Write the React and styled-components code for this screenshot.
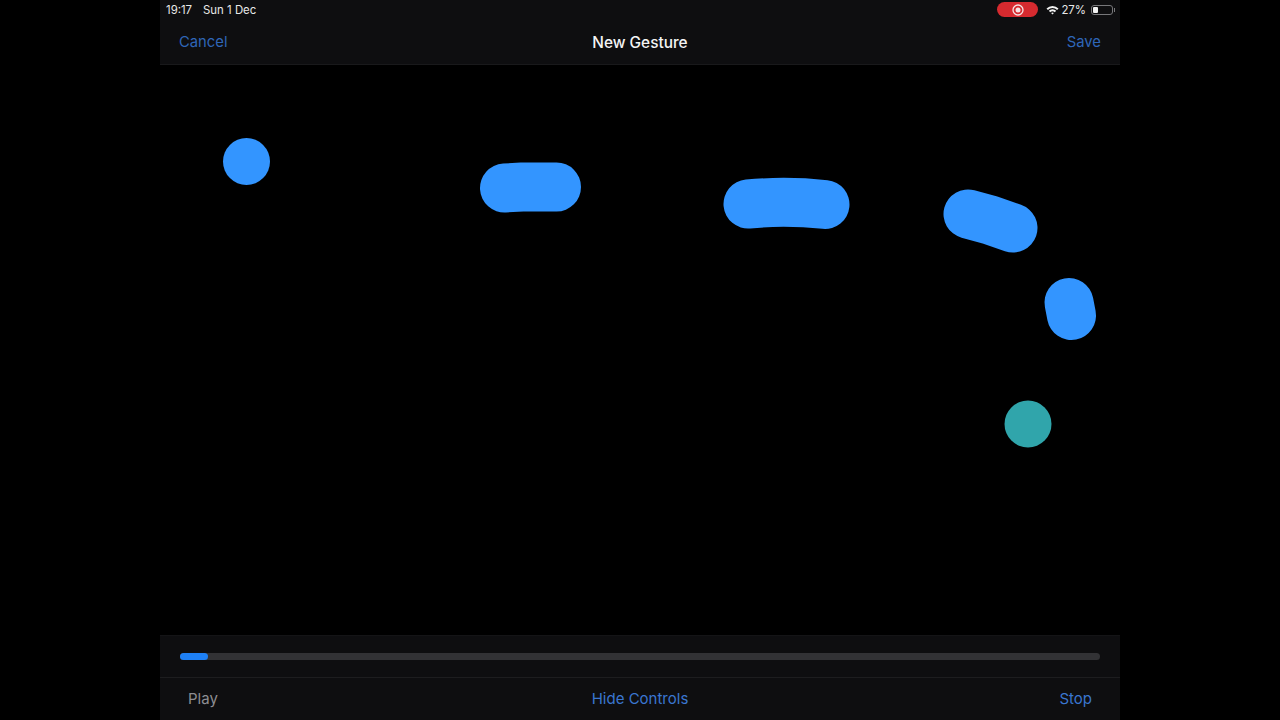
import styled, { createGlobalStyle } from "styled-components";

const GlobalStyle = createGlobalStyle`
  html, body {
    margin: 0;
    padding: 0;
    background: #000;
  }
  body {
    font-family: Inter, "Liberation Sans", sans-serif;
  }
`;

const Page = styled.div`
  width: 100%;
  height: 720px;
  display: flex;
  justify-content: center;
  overflow: hidden;
  background: #000;
`;

const Screen = styled.div`
  width: 960px;
  height: 720px;
  display: flex;
  flex-direction: column;
  background: #000;
`;

const Header = styled.header`
  height: 65px;
  flex: none;
  background: #0e0e10;
  border-bottom: 1px solid #19191b;
  box-sizing: border-box;
`;

const StatusBar = styled.div`
  height: 19px;
  padding: 0 5px 0 6px;
  display: flex;
  align-items: center;
  justify-content: space-between;
  font-size: 11.4px;
  color: #e8e8e8;
`;

const StatusGroup = styled.div`
  display: flex;
  align-items: center;
  gap: ${(p) => p.$gap || 0}px;
`;

const RecordPill = styled.div`
  width: 41px;
  height: 15px;
  margin-right: 8px;
  border-radius: 8px;
  background: #d62a2f;
  display: flex;
  align-items: center;
  justify-content: center;
`;

const WifiIcon = styled.svg`
  margin-right: 2px;
`;

const BatteryBody = styled.div`
  width: 22px;
  height: 10px;
  padding: 1px;
  margin-left: 5px;
  box-sizing: border-box;
  border: 1px solid #77777a;
  border-radius: 3px;
  display: flex;
`;

const BatteryLevel = styled.div`
  width: 27%;
  background: #f2f2f2;
  border-radius: 1px;
`;

const BatteryCap = styled.div`
  width: 1px;
  height: 4px;
  margin-left: 1px;
  background: #77777a;
`;

const NavRow = styled.div`
  height: 45px;
  box-sizing: border-box;
  padding: 1px 19px 0;
  display: grid;
  grid-template-columns: 1fr auto 1fr;
  align-items: center;
`;

const NavTitle = styled.div`
  font-size: 15.4px;
  font-weight: 500;
  color: #f4f4f4;
`;

const NavAction = styled.div`
  font-size: 14.8px;
  color: #2f66b8;
  text-align: ${(p) => p.$align || "left"};
`;

const Canvas = styled.main`
  flex: 1;
  min-height: 0;
`;

const GestureSvg = styled.svg`
  display: block;
  width: 100%;
  height: 100%;
`;

const Footer = styled.footer`
  height: 85px;
  flex: none;
  background: #0e0e10;
  display: flex;
  flex-direction: column;
`;

const SliderRow = styled.div`
  height: 43px;
  padding: 0 20px;
  flex: none;
  box-sizing: border-box;
  display: flex;
  align-items: center;
  border-top: 1px solid #141416;
  border-bottom: 1px solid #1d1d1f;
`;

const Track = styled.div`
  width: 100%;
  height: 7px;
  border-radius: 4px;
  background: #323235;
`;

const Progress = styled.div`
  width: 28px;
  height: 100%;
  border-radius: 4px;
  background: #1e80f5;
`;

const ControlRow = styled.div`
  flex: 1;
  padding: 0 28px 1px;
  display: grid;
  grid-template-columns: 1fr auto 1fr;
  align-items: center;
`;

const Control = styled.div`
  font-size: 15px;
  color: ${(p) => (p.$muted ? "#8d8d92" : "#3a76d0")};
  text-align: ${(p) => p.$align || "left"};
`;

const strokes = [
  "M344.5 123 L362 122 L396.5 122",
  "M588 139 Q626 135.5 665 139.5",
  "M808 149 L830 155 L853 163",
  "M909 237.5 L911.5 250.5",
];

const GestureCanvas = () => (
  <GestureSvg viewBox="0 0 960 570">
    <circle cx="86.5" cy="96.5" r="23.5" fill="#3395ff" />
    {strokes.map((d) => (
      <path key={d} d={d} fill="none" stroke="#3395ff" strokeWidth="49" strokeLinecap="round" strokeLinejoin="round" />
    ))}
    <circle cx="868" cy="359" r="23.5" fill="#30a5ab" />
  </GestureSvg>
);

const App = () => (
  <>
    <GlobalStyle />
    <Page>
      <Screen>
        <Header>
          <StatusBar>
            <StatusGroup $gap={11}>
              <span>19:17</span>
              <span>Sun 1 Dec</span>
            </StatusGroup>
            <StatusGroup>
              <RecordPill>
                <svg width="12" height="12" viewBox="0 0 12 12">
                  <circle cx="6" cy="6" r="5" fill="none" stroke="#f6e4e4" strokeWidth="1.3" />
                  <circle cx="6" cy="6" r="2.5" fill="#f6e4e4" />
                </svg>
              </RecordPill>
              <WifiIcon width="13" height="10" viewBox="0 0 13 10">
                <path d="M0.5 3.4 A8.4 8.4 0 0 1 12.5 3.4 L11.1 4.9 A6.4 6.4 0 0 0 1.9 4.9 Z" fill="#f2f2f2" />
                <path d="M2.8 5.8 A5.1 5.1 0 0 1 10.2 5.8 L8.8 7.2 A3.1 3.1 0 0 0 4.2 7.2 Z" fill="#f2f2f2" />
                <path d="M5.1 8.1 A2 2 0 0 1 7.9 8.1 L6.5 9.6 Z" fill="#f2f2f2" />
              </WifiIcon>
              <span>27%</span>
              <BatteryBody>
                <BatteryLevel />
              </BatteryBody>
              <BatteryCap />
            </StatusGroup>
          </StatusBar>
          <NavRow>
            <NavAction>Cancel</NavAction>
            <NavTitle>New Gesture</NavTitle>
            <NavAction $align="right">Save</NavAction>
          </NavRow>
        </Header>
        <Canvas>
          <GestureCanvas />
        </Canvas>
        <Footer>
          <SliderRow>
            <Track>
              <Progress />
            </Track>
          </SliderRow>
          <ControlRow>
            <Control $muted>Play</Control>
            <Control>Hide Controls</Control>
            <Control $align="right">Stop</Control>
          </ControlRow>
        </Footer>
      </Screen>
    </Page>
  </>
);

export default App;
